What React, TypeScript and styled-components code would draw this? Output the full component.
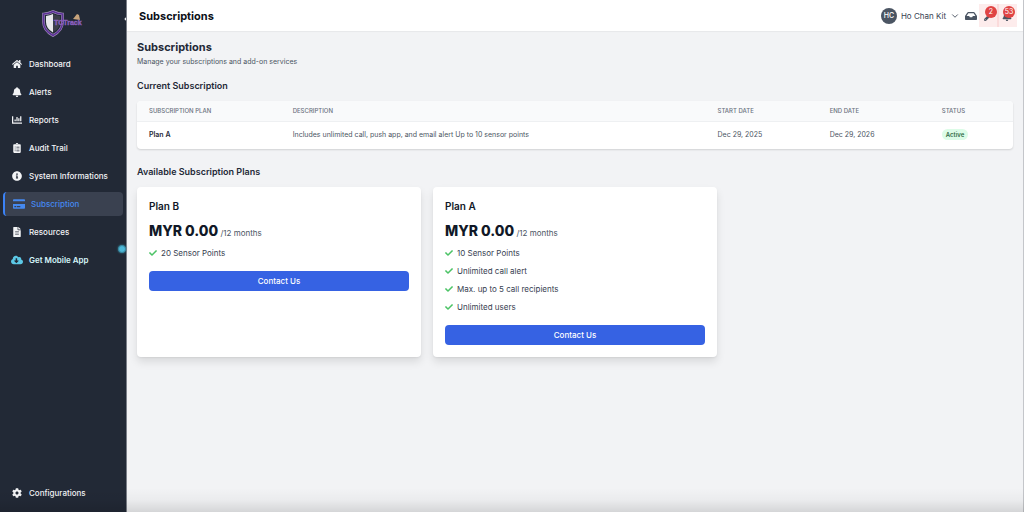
import React from "react";
import styled, { createGlobalStyle, css } from "styled-components";
import {
  FaHome, FaBell, FaChartBar, FaClipboardList, FaInfoCircle, FaCreditCard,
  FaFileAlt, FaCloudDownloadAlt, FaCog, FaInbox, FaCheck, FaWrench, FaChevronLeft,
} from "react-icons/fa";
import { FiChevronDown } from "react-icons/fi";

const GlobalStyle = createGlobalStyle`
  *, *::before, *::after { box-sizing: border-box; }
  body { margin: 0; font-family: Inter, "Liberation Sans", sans-serif; background: #f2f3f5; color: #1f2937; }
  h1, h2, h3, h4, p, ul { margin: 0; padding: 0; }
  ul { list-style: none; }
  button { font: inherit; border: 0; background: none; padding: 0; cursor: pointer; color: inherit; }
  svg { display: block; flex-shrink: 0; }
`;

const Shell = styled.div`
  display: flex;
  min-height: 100vh;
  position: relative;
`;

const Sidebar = styled.aside`
  position: relative;
  width: 127px;
  flex-shrink: 0;
  display: flex;
  flex-direction: column;
  background: #222936;
  border-right: 1px solid #7b7f88;
  padding-bottom: 7px;
`;

const LogoRow = styled.div`
  display: flex;
  justify-content: center;
  padding: 10px 0;
  height: 50px;
`;

const Collapse = styled.button`
  position: absolute;
  top: 14px;
  right: 0;
  width: 3px;
  height: 10px;
  overflow: hidden;
  color: #fff;
  font-size: 6px;
`;

const NavList = styled.ul`
  display: flex;
  flex-direction: column;
  gap: 4px;
  padding: 2px 3px 0 3px;
`;

const Spacer = styled.div`
  flex: 1;
`;

const activeLink = css`
  background: #3a4150;
  border-left-color: #3b82f6;
  color: #4589f0;
  padding-left: 8px;
`;

const NavLink = styled.a<{ $active?: boolean; $mobile?: boolean }>`
  position: relative;
  display: flex;
  align-items: center;
  gap: 6px;
  height: 24px;
  padding-left: 6px;
  border-left: 2px solid transparent;
  border-radius: 4px;
  color: ${(p) => (p.$mobile ? "#d5f5fa" : "#f3f4f6")};
  font-size: 8px;
  line-height: 12px;
  font-weight: ${(p) => (p.$mobile ? 600 : 500)};
  text-decoration: none;
  white-space: nowrap;
  ${(p) => p.$active && activeLink}
`;

const NavIcon = styled.span<{ $large?: boolean; $mobile?: boolean }>`
  display: flex;
  justify-content: center;
  width: 12px;
  font-size: ${(p) => (p.$large ? 12 : 10)}px;
  color: ${(p) => (p.$mobile ? "#5cc8e6" : "inherit")};
`;

const Pulse = styled.span`
  position: absolute;
  right: -3px;
  top: -3px;
  width: 8px;
  height: 8px;
  border-radius: 50%;
  background: #4db8d8;
  border: 1px solid #38879f;
  box-shadow: 0 0 2px #38879f;
`;

const Main = styled.div`
  flex: 1;
  min-width: 0;
  border-right: 1px solid #c4c6ca;
`;

const TopBar = styled.header`
  display: flex;
  align-items: center;
  justify-content: space-between;
  height: 31px;
  padding: 0 6px 0 12px;
  background: #fff;
  box-shadow: 0 1px 1px rgba(0, 0, 0, 0.04);
`;

const BarTitle = styled.h1`
  font-size: 11px;
  line-height: 16px;
  font-weight: 700;
  color: #0b0f17;
`;

const Tools = styled.div`
  display: flex;
  align-items: center;
`;

const UserButton = styled.button`
  display: flex;
  align-items: center;
  gap: 4px;
  margin-right: 4px;
  font-size: 8px;
  line-height: 12px;
  color: #374151;
`;

const Avatar = styled.span`
  display: grid;
  place-items: center;
  width: 16px;
  height: 16px;
  border-radius: 50%;
  background: #4b5563;
  color: #fff;
  font-size: 7px;
  font-weight: 500;
`;

const InboxButton = styled.button`
  display: grid;
  place-items: center;
  width: 14px;
  height: 23px;
  margin-right: 1px;
  color: #4b5563;
  font-size: 12px;
`;

const AlertButton = styled.button`
  position: relative;
  display: grid;
  place-items: center;
  width: 20px;
  height: 23px;
  background: rgba(239, 68, 68, 0.1);
  color: #4b5563;
  font-size: 10px;

  & + & { margin-left: -2px; }
`;

const Badge = styled.span`
  position: absolute;
  top: 2px;
  right: 2px;
  display: grid;
  place-items: center;
  width: 12px;
  height: 12px;
  border-radius: 50%;
  background: #e04444;
  color: #fff;
  font-size: 7px;
  line-height: 12px;
`;

const Content = styled.main`
  padding: 8px 10px 24px;
`;

const PageTitle = styled.h2`
  font-size: 11px;
  line-height: 16px;
  font-weight: 700;
`;

const Lead = styled.p`
  margin-top: 1px;
  font-size: 7px;
  line-height: 12px;
  color: #4b5563;
`;

const SectionTitle = styled.h3`
  font-size: 9px;
  line-height: 12px;
  font-weight: 600;
`;

const Section = styled.section`
  margin-top: 12px;

  & + & { margin-top: 17px; }
`;

const TableCard = styled.div`
  margin-top: 9px;
  border-radius: 4px;
  overflow: hidden;
  background: #fff;
  box-shadow: 0 1px 2px rgba(0, 0, 0, 0.14);
`;

const Table = styled.table`
  width: 100%;
  border-collapse: collapse;
  table-layout: fixed;
  text-align: left;
`;

const Th = styled.th<{ $w?: string }>`
  width: ${(p) => p.$w ?? "auto"};
  height: 20px;
  padding: 0 12px;
  background: #f9fafb;
  border-bottom: 1px solid #eef0f2;
  font-size: 6px;
  line-height: 8px;
  font-weight: 500;
  color: #6b7280;
  text-transform: uppercase;
`;

const Td = styled.td<{ $strong?: boolean }>`
  height: 28px;
  padding: 0 12px;
  font-size: 7px;
  line-height: 12px;
  font-weight: ${(p) => (p.$strong ? 600 : 400)};
  color: ${(p) => (p.$strong ? "#1f2937" : "#4b5563")};
`;

const Status = styled.span`
  display: inline-block;
  padding: 0 4px;
  border-radius: 6px;
  background: #dcfce7;
  color: #2f6b45;
  font-size: 6px;
  line-height: 11px;
  font-weight: 600;
`;

const PlanGrid = styled.div`
  display: grid;
  grid-template-columns: repeat(3, 1fr);
  gap: 12px;
  margin-top: 9px;
`;

const PlanCard = styled.article`
  padding: 12px;
  border-radius: 4px;
  background: #fff;
  box-shadow: 0 5px 8px rgba(0, 0, 0, 0.1), 0 1px 2px rgba(0, 0, 0, 0.06);
`;

const PlanName = styled.h4`
  font-size: 10px;
  line-height: 14px;
  font-weight: 600;
  color: #111827;
`;

const Price = styled.p`
  margin-top: 8px;
  font-size: 14px;
  line-height: 20px;
  font-weight: 800;
  color: #111827;
`;

const Period = styled.span`
  font-size: 8px;
  font-weight: 400;
  color: #4b5563;
`;

const Features = styled.ul`
  display: flex;
  flex-direction: column;
  gap: 6px;
  margin-top: 4px;
`;

const Feature = styled.li`
  display: flex;
  align-items: center;
  gap: 4px;
  font-size: 8px;
  line-height: 12px;
  color: #374151;

  svg { color: #4cc366; }
`;

const Contact = styled.button`
  display: block;
  width: 100%;
  height: 20px;
  margin-top: 12px;
  border-radius: 4px;
  background: #3662e3;
  color: #fff;
  font-size: 8px;
  font-weight: 500;
`;

const BottomShade = styled.div`
  position: absolute;
  inset: auto 0 0 0;
  height: 24px;
  pointer-events: none;
  background: linear-gradient(rgba(0, 0, 0, 0), rgba(0, 0, 0, 0.03) 50%, rgba(0, 0, 0, 0.12));
`;

const Logo = () => (
  <svg width="44" height="27" viewBox="0 0 44 27" role="img" aria-label="TCTrack">
    <path d="M12 1.5 Q16 3.7 21.5 4 V12 Q21.5 20.5 12 25.5 Q2.5 20.5 2.5 12 V4 Q8 3.7 12 1.5Z" fill="#222936" stroke="#a897bd" strokeWidth="2.6" />
    <path d="M12 1.5 Q16 3.7 21.5 4 V12 Q21.5 20.5 12 25.5 Q2.5 20.5 2.5 12 V4 Q8 3.7 12 1.5Z" fill="none" stroke="#5c3197" strokeWidth="1.6" />
    <path d="M12 4 Q8.5 5.5 5 6 V12 Q5 18.5 12 22.5Z" fill="#e9e9ec" />
    <path d="M12 4 Q15 5.5 19 6 V12 Q19 18.5 12 22.5Z" fill="#3c3e4a" />
    <path d="M32 9 L36 4 L38 5 L39 10Z" fill="#c7a37b" />
    <text x="13" y="15" fontFamily="Liberation Sans, sans-serif" fontSize="7" fontWeight="700" fill="#8a5fbd" stroke="#8a5fbd" strokeWidth="0.4">TCTrack</text>
  </svg>
);

const navItems = [
  { label: "Dashboard", Icon: FaHome },
  { label: "Alerts", Icon: FaBell },
  { label: "Reports", Icon: FaChartBar },
  { label: "Audit Trail", Icon: FaClipboardList },
  { label: "System Informations", Icon: FaInfoCircle },
  { label: "Subscription", Icon: FaCreditCard, active: true },
  { label: "Resources", Icon: FaFileAlt },
  { label: "Get Mobile App", Icon: FaCloudDownloadAlt, mobile: true },
];

const plans = [
  { name: "Plan B", features: ["20 Sensor Points"] },
  {
    name: "Plan A",
    features: ["10 Sensor Points", "Unlimited call alert", "Max. up to 5 call recipients", "Unlimited users"],
  },
];

export default function App() {
  return (
    <>
      <GlobalStyle />
      <Shell>
        <Sidebar>
          <LogoRow><Logo /></LogoRow>
          <Collapse aria-label="Collapse sidebar"><FaChevronLeft /></Collapse>
          <NavList>
            {navItems.map(({ label, Icon, active, mobile }) => (
              <li key={label}>
                <NavLink href="#" $active={active} $mobile={mobile} aria-current={active ? "page" : undefined}>
                  <NavIcon $large={active || mobile} $mobile={mobile}><Icon /></NavIcon>
                  {label}
                  {mobile && <Pulse />}
                </NavLink>
              </li>
            ))}
          </NavList>
          <Spacer />
          <NavList>
            <li>
              <NavLink href="#"><NavIcon><FaCog /></NavIcon>Configurations</NavLink>
            </li>
          </NavList>
        </Sidebar>
        <Main>
          <TopBar>
            <BarTitle>Subscriptions</BarTitle>
            <Tools>
              <UserButton>
                <Avatar>HC</Avatar>
                Ho Chan Kit
                <FiChevronDown size={10} />
              </UserButton>
              <InboxButton aria-label="Inbox"><FaInbox /></InboxButton>
              <AlertButton aria-label="Maintenance"><FaWrench /><Badge>2</Badge></AlertButton>
              <AlertButton aria-label="Notifications"><FaBell /><Badge>53</Badge></AlertButton>
            </Tools>
          </TopBar>
          <Content>
            <PageTitle>Subscriptions</PageTitle>
            <Lead>Manage your subscriptions and add-on services</Lead>
            <Section>
              <SectionTitle>Current Subscription</SectionTitle>
              <TableCard>
                <Table>
                  <thead>
                    <tr>
                      <Th $w="16.4%">Subscription Plan</Th>
                      <Th>Description</Th>
                      <Th $w="12.8%">Start Date</Th>
                      <Th $w="12.8%">End Date</Th>
                      <Th $w="9.5%">Status</Th>
                    </tr>
                  </thead>
                  <tbody>
                    <tr>
                      <Td $strong>Plan A</Td>
                      <Td>Includes unlimited call, push app, and email alert Up to 10 sensor points</Td>
                      <Td>Dec 29, 2025</Td>
                      <Td>Dec 29, 2026</Td>
                      <Td><Status>Active</Status></Td>
                    </tr>
                  </tbody>
                </Table>
              </TableCard>
            </Section>
            <Section>
              <SectionTitle>Available Subscription Plans</SectionTitle>
              <PlanGrid>
                {plans.map((plan) => (
                  <PlanCard key={plan.name}>
                    <PlanName>{plan.name}</PlanName>
                    <Price>MYR 0.00<Period> /12 months</Period></Price>
                    <Features>
                      {plan.features.map((f) => (
                        <Feature key={f}><FaCheck size={8} />{f}</Feature>
                      ))}
                    </Features>
                    <Contact>Contact Us</Contact>
                  </PlanCard>
                ))}
              </PlanGrid>
            </Section>
          </Content>
        </Main>
        <BottomShade />
      </Shell>
    </>
  );
}
